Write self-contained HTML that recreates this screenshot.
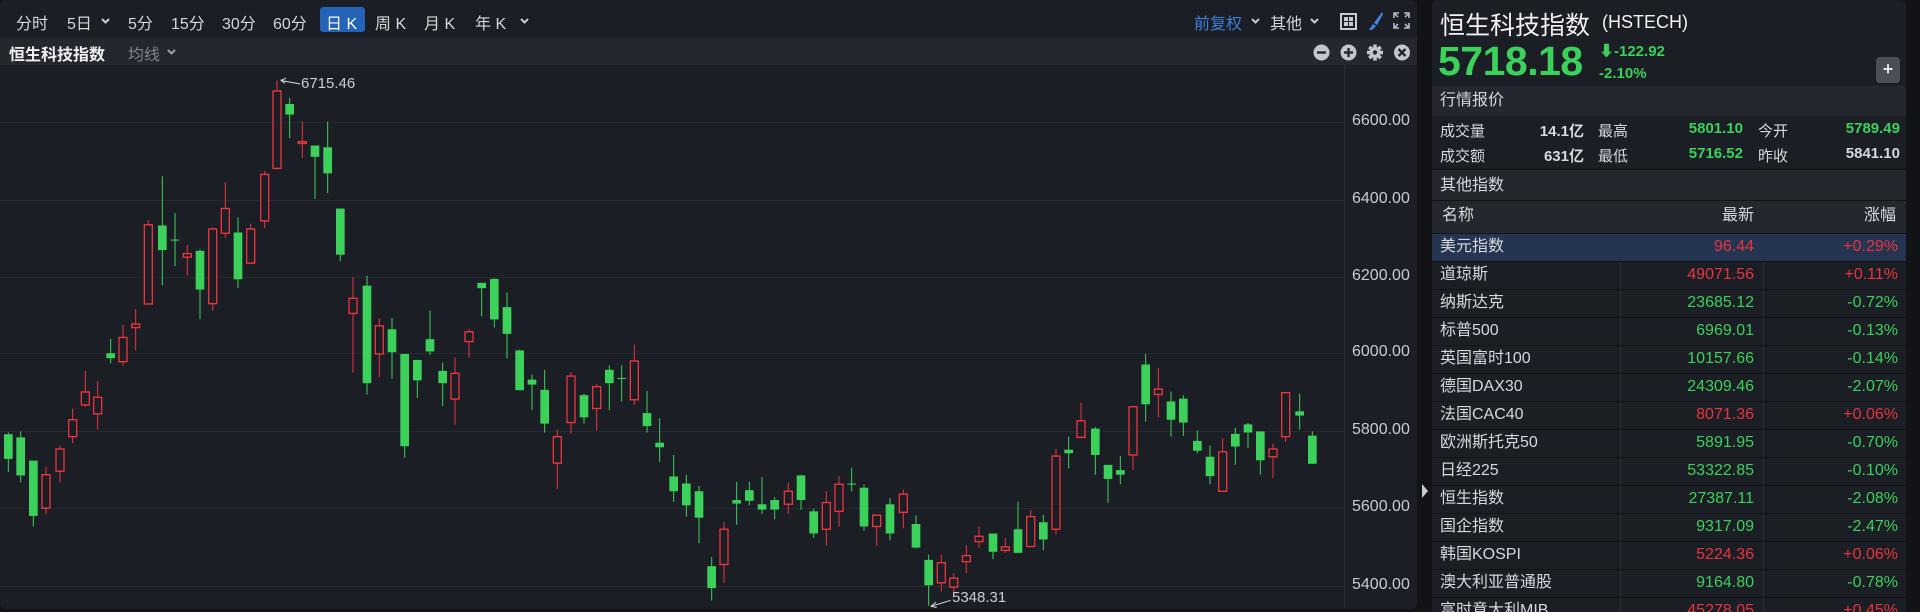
<!DOCTYPE html>
<html><head><meta charset="utf-8">
<style>
*{margin:0;padding:0;box-sizing:border-box}
body{width:1920px;height:612px;background:#121317;position:relative;overflow:hidden;font-family:"Liberation Sans","Noto Sans CJK SC",sans-serif;color:#d5d8de}
.abs{position:absolute;white-space:nowrap}
#left{position:absolute;left:0;top:0;width:1417px;height:609px;background:#1c1e25;border-radius:6px;overflow:hidden}
#tb{position:absolute;left:0;top:0;width:1417px;height:37px;background:#1c1e25}
#sb{position:absolute;left:0;top:37px;width:1417px;height:28px;background:#25272f}
.t{font-size:16px;color:#d3d6dc;top:10px}
.ylab{font-size:16px;color:#c9ccd2;left:1352px}
.grid{position:absolute;left:0;width:1344px;height:1px;background:#262931}
svg.c{position:absolute;top:60px;width:460px;height:552px;overflow:visible}
.G path{stroke:#3bd15a;stroke-width:3}
.G rect{fill:#3bd15a}
.R path{stroke:#e8343d;stroke-width:3}
.R rect{fill:#1c1e25;stroke:#e8343d;stroke-width:4}
#right{position:absolute;left:1432px;top:0;width:474px;height:612px;background:#1c1e25;border-radius:6px 6px 0 0;overflow:hidden}
.sec{position:absolute;left:0;width:474px;background:#25272f;font-size:16px;color:#d5d8de;padding-left:8px}
.row{position:absolute;left:0;width:474px;height:28px;border-top:1px solid #121317;font-size:16px;line-height:26px}
.row span{position:absolute;top:0}
.gr{color:#3bd15a}.rd{color:#e8343d}
</style></head><body>
<div id="left">
 <div id="tb">
  <span class="abs t" style="left:16px">分时</span>
  <span class="abs t" style="left:67px">5日</span><svg class="abs" style="left:101px;top:18px" width="9" height="6" viewBox="0 0 9 6"><path d="M1 1L4.5 4.5L8 1" stroke="#c8ccd2" stroke-width="2" fill="none"/></svg>
  <span class="abs t" style="left:128px">5分</span>
  <span class="abs t" style="left:171px">15分</span>
  <span class="abs t" style="left:222px">30分</span>
  <span class="abs t" style="left:273px">60分</span>
  <div class="abs" style="left:320px;top:7px;width:45px;height:25px;background:#2563b8;border-radius:3px"></div>
  <span class="abs t" style="left:326px;color:#fff">日 K</span>
  <span class="abs t" style="left:375px">周 K</span>
  <span class="abs t" style="left:424px">月 K</span>
  <span class="abs t" style="left:475px">年 K</span><svg class="abs" style="left:520px;top:18px" width="9" height="6" viewBox="0 0 9 6"><path d="M1 1L4.5 4.5L8 1" stroke="#c8ccd2" stroke-width="2" fill="none"/></svg>
  <span class="abs t" style="left:1194px;color:#3d80d8">前复权</span><svg class="abs" style="left:1251px;top:18px" width="9" height="6" viewBox="0 0 9 6"><path d="M1 1L4.5 4.5L8 1" stroke="#c8ccd2" stroke-width="2" fill="none"/></svg>
  <span class="abs t" style="left:1270px">其他</span><svg class="abs" style="left:1310px;top:18px" width="9" height="6" viewBox="0 0 9 6"><path d="M1 1L4.5 4.5L8 1" stroke="#c8ccd2" stroke-width="2" fill="none"/></svg>
  <svg class="abs" style="left:1340px;top:13px" width="17" height="17" viewBox="0 0 17 17"><rect x="1" y="1" width="15" height="15" fill="none" stroke="#c8ccd2" stroke-width="2"/><rect x="4" y="4" width="4" height="4" fill="#c8ccd2"/><rect x="9" y="4" width="4" height="4" fill="#c8ccd2"/><rect x="4" y="9" width="4" height="4" fill="#c8ccd2"/><rect x="9" y="9" width="4" height="4" fill="#c8ccd2"/></svg>
  <svg class="abs" style="left:1367px;top:11px" width="17" height="20" viewBox="0 0 17 20"><path d="M15 1 L7 12 L10 14 L16 3 Z" fill="#3d88e0"/><path d="M6 13 L9 15 L5 19 L2 19 Z" fill="#3d88e0"/></svg>
  <svg class="abs" style="left:1393px;top:12px" width="17" height="17" viewBox="0 0 17 17" stroke="#b8bcc3" stroke-width="1.6" fill="none"><path d="M1 6V1H6M1 1L5 5M11 1H16V6M16 1L12 5M1 11V16H6M1 16L5 12M16 11V16H11M16 16L12 12"/></svg>
 </div>
 <div id="sb">
  <span class="abs" style="left:9px;top:4px;font-size:16px;font-weight:bold;color:#eef0f3">恒生科技指数</span>
  <span class="abs" style="left:128px;top:4px;font-size:16px;color:#7f838b">均线</span><svg class="abs" style="left:167px;top:12px" width="9" height="6" viewBox="0 0 9 6"><path d="M1 1L4.5 4.5L8 1" stroke="#a0a4ab" stroke-width="2" fill="none"/></svg>
  <svg class="abs" style="left:1313px;top:7px" width="100" height="17" viewBox="0 0 100 17">
   <circle cx="8.5" cy="8.5" r="8" fill="#c4c8ce"/><rect x="4" y="7.3" width="9" height="2.4" fill="#25272f"/>
   <circle cx="35.5" cy="8.5" r="8" fill="#c4c8ce"/><rect x="31" y="7.3" width="9" height="2.4" fill="#25272f"/><rect x="34.3" y="4" width="2.4" height="9" fill="#25272f"/>
   <g transform="translate(62 8.5)" fill="#c4c8ce"><circle r="5.5"/><g><rect x="-1.8" y="-8" width="3.6" height="16"/><rect x="-1.8" y="-8" width="3.6" height="16" transform="rotate(45)"/><rect x="-1.8" y="-8" width="3.6" height="16" transform="rotate(90)"/><rect x="-1.8" y="-8" width="3.6" height="16" transform="rotate(135)"/></g><circle r="2.2" fill="#25272f"/></g>
   <circle cx="89" cy="8.5" r="8" fill="#c4c8ce"/><path d="M85.5 5L92.5 12M92.5 5L85.5 12" stroke="#25272f" stroke-width="2.4"/>
  </svg>
 </div>
 <div class="grid" style="top:122px"></div><div class="grid" style="top:200px"></div><div class="grid" style="top:277px"></div><div class="grid" style="top:353px"></div><div class="grid" style="top:431px"></div><div class="grid" style="top:508px"></div><div class="grid" style="top:586px"></div>
 <div class="abs" style="left:1344px;top:65px;width:1px;height:544px;background:#2a2d35"></div>
 <span class="abs ylab" style="top:112px">6600.00</span>
 <span class="abs ylab" style="top:190px">6400.00</span>
 <span class="abs ylab" style="top:267px">6200.00</span>
 <span class="abs ylab" style="top:343px">6000.00</span>
 <span class="abs ylab" style="top:421px">5800.00</span>
 <span class="abs ylab" style="top:498px">5600.00</span>
 <span class="abs ylab" style="top:576px">5400.00</span>
</div>

<svg class="c" style="left:0" viewBox="0 0 1380 1568" preserveAspectRatio="none">
<g class="G"><path d="M25 1058V1170"/><rect x="12" y="1063" width="26" height="70"/><path d="M62 1055V1200"/><rect x="49" y="1072" width="26" height="108"/><path d="M100 1138V1325"/><rect x="87" y="1138" width="26" height="157"/><path d="M332 792V862"/><rect x="319" y="833" width="26" height="14"/><path d="M487 330V640"/><rect x="474" y="470" width="26" height="70"/><path d="M525 435V585"/><rect x="512" y="510" width="26" height="3"/><path d="M600 538V737"/><rect x="587" y="542" width="26" height="110"/><path d="M714 447V648"/><rect x="701" y="490" width="26" height="133"/><path d="M869 108V222"/><rect x="856" y="125" width="26" height="30"/><path d="M945 243V395"/><rect x="932" y="243" width="26" height="32"/><path d="M983 175V378"/><rect x="970" y="248" width="26" height="74"/><path d="M1021 422V572"/><rect x="1008" y="422" width="26" height="131"/><path d="M1101 613V950"/><rect x="1088" y="641" width="26" height="277"/><path d="M1176 732V905"/><rect x="1163" y="765" width="26" height="65"/><path d="M1214 835V1130"/><rect x="1201" y="835" width="26" height="262"/><path d="M1252 852V960"/><rect x="1239" y="852" width="26" height="58"/><path d="M1290 712V838"/><rect x="1277" y="793" width="26" height="35"/><path d="M1328 860V983"/><rect x="1315" y="883" width="26" height="35"/></g>
<g class="R"><path d="M138 1155V1290"/><rect x="126" y="1178" width="24" height="95"/><path d="M180 1095V1200"/><rect x="168" y="1105" width="24" height="63"/><path d="M218 990V1088"/><rect x="206" y="1022" width="24" height="48"/><path d="M256 883V985"/><rect x="244" y="943" width="24" height="37"/><path d="M293 912V1050"/><rect x="281" y="958" width="24" height="47"/><path d="M369 752V868"/><rect x="357" y="788" width="24" height="69"/><path d="M407 708V825"/><rect x="395" y="750" width="24" height="10"/><path d="M445 455V693"/><rect x="433" y="468" width="24" height="225"/><path d="M562 525V612"/><rect x="550" y="550" width="24" height="10"/><path d="M638 475V712"/><rect x="626" y="480" width="24" height="212"/><path d="M676 347V505"/><rect x="664" y="422" width="24" height="70"/><path d="M752 465V578"/><rect x="740" y="480" width="24" height="97"/><path d="M794 315V478"/><rect x="782" y="325" width="24" height="132"/><path d="M831 58V310"/><rect x="819" y="88" width="24" height="220"/><path d="M907 175V278"/><rect x="895" y="232" width="24" height="5"/><path d="M1059 617V888"/><rect x="1047" y="677" width="24" height="43"/><path d="M1138 733V902"/><rect x="1126" y="755" width="24" height="80"/><path d="M1365 845V1035"/><rect x="1353" y="890" width="24" height="73"/></g>
<path d="M842 58L900 68M842 58L858 52M842 58L855 66" stroke="#c9ccd2" stroke-width="3" fill="none"/>
</svg>

<svg class="c" style="left:440px" viewBox="0 0 1380 1568" preserveAspectRatio="none">
<g class="G"><path d="M125 633V728"/><rect x="112" y="633" width="26" height="15"/><path d="M163 620V760"/><rect x="150" y="622" width="26" height="115"/><path d="M201 660V848"/><rect x="188" y="702" width="26" height="76"/><path d="M239 823V938"/><rect x="226" y="825" width="26" height="113"/><path d="M276 893V995"/><rect x="263" y="908" width="26" height="14"/><path d="M314 880V1058"/><rect x="301" y="937" width="26" height="96"/><path d="M432 948V1033"/><rect x="419" y="952" width="26" height="63"/><path d="M508 867V995"/><rect x="495" y="880" width="26" height="38"/><path d="M545 867V970"/><rect x="532" y="903" width="26" height="3"/><path d="M621 940V1058"/><rect x="608" y="1003" width="26" height="37"/><path d="M659 1018V1142"/><rect x="646" y="1087" width="26" height="13"/><path d="M701 1122V1255"/><rect x="688" y="1183" width="26" height="42"/><path d="M739 1178V1297"/><rect x="726" y="1203" width="26" height="62"/><path d="M777 1210V1373"/><rect x="764" y="1225" width="26" height="75"/><path d="M815 1412V1535"/><rect x="802" y="1438" width="26" height="62"/><path d="M890 1198V1320"/><rect x="877" y="1250" width="26" height="10"/><path d="M928 1198V1265"/><rect x="915" y="1222" width="26" height="30"/><path d="M966 1185V1290"/><rect x="953" y="1262" width="26" height="15"/><path d="M1004 1242V1305"/><rect x="991" y="1250" width="26" height="27"/><path d="M1083 1178V1278"/><rect x="1070" y="1180" width="26" height="70"/><path d="M1121 1275V1357"/><rect x="1108" y="1282" width="26" height="63"/><path d="M1235 1158V1225"/><rect x="1222" y="1203" width="26" height="3"/><path d="M1272 1205V1337"/><rect x="1259" y="1215" width="26" height="110"/><path d="M1350 1245V1365"/><rect x="1337" y="1262" width="26" height="83"/></g>
<g class="R"><path d="M87 765V845"/><rect x="75" y="772" width="24" height="28"/><path d="M352 1050V1218"/><rect x="340" y="1070" width="24" height="75"/><path d="M393 887V1062"/><rect x="381" y="898" width="24" height="132"/><path d="M470 920V1052"/><rect x="458" y="928" width="24" height="62"/><path d="M583 808V980"/><rect x="571" y="855" width="24" height="110"/><path d="M852 1313V1485"/><rect x="840" y="1333" width="24" height="100"/><path d="M1045 1200V1290"/><rect x="1033" y="1225" width="24" height="37"/><path d="M1159 1225V1380"/><rect x="1147" y="1257" width="24" height="76"/><path d="M1197 1182V1325"/><rect x="1185" y="1205" width="24" height="77"/><path d="M1310 1292V1380"/><rect x="1298" y="1293" width="24" height="32"/></g>
</svg>

<svg class="c" style="left:880px" viewBox="0 0 1380 1568" preserveAspectRatio="none">
<g class="G"><path d="M108 1293V1388"/><rect x="95" y="1318" width="26" height="67"/><path d="M146 1405V1550"/><rect x="133" y="1420" width="26" height="72"/><path d="M339 1345V1418"/><rect x="326" y="1345" width="26" height="52"/><path d="M414 1255V1400"/><rect x="401" y="1333" width="26" height="67"/><path d="M490 1292V1392"/><rect x="477" y="1313" width="26" height="49"/><path d="M566 1070V1160"/><rect x="553" y="1107" width="26" height="10"/><path d="M646 1043V1178"/><rect x="633" y="1047" width="26" height="75"/><path d="M684 1150V1258"/><rect x="671" y="1150" width="26" height="40"/><path d="M721 1125V1205"/><rect x="708" y="1165" width="26" height="13"/><path d="M797 835V1027"/><rect x="784" y="865" width="26" height="113"/><path d="M873 942V1070"/><rect x="860" y="970" width="26" height="52"/><path d="M910 952V1068"/><rect x="897" y="962" width="26" height="68"/><path d="M952 1052V1117"/><rect x="939" y="1082" width="26" height="28"/><path d="M990 1095V1205"/><rect x="977" y="1127" width="26" height="55"/><path d="M1066 1045V1150"/><rect x="1053" y="1062" width="26" height="36"/><path d="M1104 1030V1102"/><rect x="1091" y="1035" width="26" height="23"/><path d="M1141 1055V1178"/><rect x="1128" y="1055" width="26" height="82"/><path d="M1259 948V1050"/><rect x="1246" y="998" width="26" height="12"/><path d="M1297 1055V1147"/><rect x="1284" y="1067" width="26" height="80"/></g>
<g class="R"><path d="M70 1220V1330"/><rect x="58" y="1233" width="24" height="52"/><path d="M184 1405V1510"/><rect x="172" y="1428" width="24" height="57"/><path d="M221 1458V1520"/><rect x="209" y="1472" width="24" height="25"/><path d="M259 1378V1458"/><rect x="247" y="1408" width="24" height="17"/><path d="M297 1325V1385"/><rect x="285" y="1353" width="24" height="15"/><path d="M376 1358V1400"/><rect x="364" y="1383" width="24" height="10"/><path d="M452 1278V1383"/><rect x="440" y="1297" width="24" height="85"/><path d="M528 1105V1348"/><rect x="516" y="1125" width="24" height="208"/><path d="M603 973V1073"/><rect x="591" y="1025" width="24" height="47"/><path d="M759 985V1165"/><rect x="747" y="985" width="24" height="137"/><path d="M835 875V1015"/><rect x="823" y="935" width="24" height="15"/><path d="M1028 1075V1227"/><rect x="1016" y="1113" width="24" height="112"/><path d="M1179 1090V1187"/><rect x="1167" y="1105" width="24" height="22"/><path d="M1217 943V1085"/><rect x="1205" y="945" width="24" height="125"/></g>
<path d="M152 1552L212 1535M152 1552L168 1540M152 1552L170 1555" stroke="#c9ccd2" stroke-width="3" fill="none"/>
</svg>
<span class="abs" style="left:952px;top:589px;font-size:15px;color:#c9ccd2">5348.31</span>
<span class="abs" style="left:301px;top:75px;font-size:15px;color:#c9ccd2">6715.46</span>

<svg class="abs" style="left:1420px;top:482px" width="10" height="18" viewBox="0 0 10 18"><path d="M2 2L8 9L2 16Z" fill="#c8ccd2"/></svg>

<div id="right">
 <span class="abs" style="left:8px;top:6px;font-size:25px;color:#f0f2f5">恒生科技指数</span>
 <span class="abs" style="left:170px;top:12px;font-size:18px;color:#f0f2f5">(HSTECH)</span>
 <span class="abs" style="left:6px;top:38px;font-size:41px;font-weight:bold;color:#3bd15a;letter-spacing:-0.5px">5718.18</span>
 <span class="abs" style="left:167px;top:40px;font-size:15px;font-weight:bold;color:#3bd15a">⬇-122.92</span>
 <span class="abs" style="left:167px;top:65px;font-size:15px;font-weight:bold;color:#3bd15a">-2.10%</span>
 <div class="abs" style="left:444px;top:57px;width:24px;height:26px;background:#4a4e57;border-radius:4px;color:#e0e2e6;font-size:18px;font-weight:bold;text-align:center;line-height:25px">+</div>
 <div class="sec" style="top:86px;height:30px;line-height:30px">行情报价</div>
 <div class="abs" style="left:0;top:116px;width:474px;height:53px;font-size:15px">
  <span class="abs" style="left:8px;top:4px">成交量</span><span class="abs" style="right:322px;top:4px;font-weight:bold">14.1亿</span>
  <span class="abs" style="left:166px;top:4px">最高</span><span class="abs gr" style="right:163px;top:4px;font-weight:bold">5801.10</span>
  <span class="abs" style="left:326px;top:4px">今开</span><span class="abs gr" style="right:6px;top:4px;font-weight:bold">5789.49</span>
  <span class="abs" style="left:8px;top:29px">成交额</span><span class="abs" style="right:322px;top:29px;font-weight:bold">631亿</span>
  <span class="abs" style="left:166px;top:29px">最低</span><span class="abs gr" style="right:163px;top:29px;font-weight:bold">5716.52</span>
  <span class="abs" style="left:326px;top:29px">昨收</span><span class="abs" style="right:6px;top:29px;font-weight:bold">5841.10</span>
 </div>
 <div class="sec" style="top:169px;height:31px;line-height:31px;border-top:1px solid #121317">其他指数</div>
 <div class="abs" style="left:0;top:200px;width:474px;height:33px;background:#25272f;border-top:1px solid #121317;font-size:16px;line-height:30px">
  <span class="abs" style="left:10px;top:0">名称</span><span class="abs" style="right:152px;top:0">最新</span><span class="abs" style="right:10px;top:0">涨幅</span>
 </div>
 <div class="abs" style="left:188px;top:233px;width:1px;height:380px;background:#2a2d35"></div>
 <div class="abs" style="left:331px;top:233px;width:1px;height:380px;background:#2a2d35"></div>
 <div class="row" style="top:233px;background:#243451"><span style="left:8px">美元指数</span><span class="rd" style="right:152px">96.44</span><span class="rd" style="right:8px">+0.29%</span></div>
 <div class="row" style="top:261px"><span style="left:8px">道琼斯</span><span class="rd" style="right:152px">49071.56</span><span class="rd" style="right:8px">+0.11%</span></div>
 <div class="row" style="top:289px"><span style="left:8px">纳斯达克</span><span class="gr" style="right:152px">23685.12</span><span class="gr" style="right:8px">-0.72%</span></div>
 <div class="row" style="top:317px"><span style="left:8px">标普500</span><span class="gr" style="right:152px">6969.01</span><span class="gr" style="right:8px">-0.13%</span></div>
 <div class="row" style="top:345px"><span style="left:8px">英国富时100</span><span class="gr" style="right:152px">10157.66</span><span class="gr" style="right:8px">-0.14%</span></div>
 <div class="row" style="top:373px"><span style="left:8px">德国DAX30</span><span class="gr" style="right:152px">24309.46</span><span class="gr" style="right:8px">-2.07%</span></div>
 <div class="row" style="top:401px"><span style="left:8px">法国CAC40</span><span class="rd" style="right:152px">8071.36</span><span class="rd" style="right:8px">+0.06%</span></div>
 <div class="row" style="top:429px"><span style="left:8px">欧洲斯托克50</span><span class="gr" style="right:152px">5891.95</span><span class="gr" style="right:8px">-0.70%</span></div>
 <div class="row" style="top:457px"><span style="left:8px">日经225</span><span class="gr" style="right:152px">53322.85</span><span class="gr" style="right:8px">-0.10%</span></div>
 <div class="row" style="top:485px"><span style="left:8px">恒生指数</span><span class="gr" style="right:152px">27387.11</span><span class="gr" style="right:8px">-2.08%</span></div>
 <div class="row" style="top:513px"><span style="left:8px">国企指数</span><span class="gr" style="right:152px">9317.09</span><span class="gr" style="right:8px">-2.47%</span></div>
 <div class="row" style="top:541px"><span style="left:8px">韩国KOSPI</span><span class="rd" style="right:152px">5224.36</span><span class="rd" style="right:8px">+0.06%</span></div>
 <div class="row" style="top:569px"><span style="left:8px">澳大利亚普通股</span><span class="gr" style="right:152px">9164.80</span><span class="gr" style="right:8px">-0.78%</span></div>
 <div class="row" style="top:597px"><span style="left:8px">富时意大利MIB</span><span class="rd" style="right:152px">45278.05</span><span class="rd" style="right:8px">+0.45%</span></div>
</div>
</body></html>
